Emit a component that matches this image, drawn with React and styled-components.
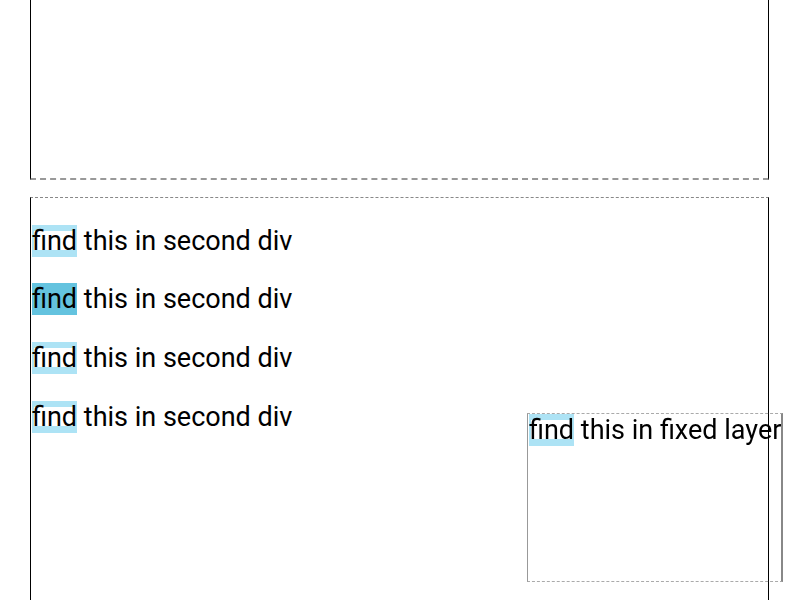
import React from "react";
import styled, { createGlobalStyle } from "styled-components";

const GlobalStyle = createGlobalStyle`
  html, body {
    margin: 0;
    padding: 0;
    background: #ffffff;
    overflow: hidden;
  }
  body {
    font-family: Roboto, "Liberation Sans", sans-serif;
    font-size: 27px;
    color: #000000;
  }
`;

const Page = styled.div`
  padding: 0 0 0 30px;
`;

const Block = styled.div`
  width: 737px;
  border-left: 1px solid #000;
  border-right: 1px solid #000;
  ${(p) => p.$top && "border-top: 1px dashed #888;"}
  ${(p) => p.$bottom && "border-bottom: 2px dashed #999;"}
  height: ${(p) => p.$height}px;
  margin-bottom: ${(p) => p.$gap || 0}px;
  overflow: hidden;
`;

const Line = styled.p`
  margin: 26.7px 0;
  white-space: nowrap;
`;

const Match = styled.span`
  background: ${(p) => (p.$active ? "#64c3df" : "#ffffff")};
  box-shadow: ${(p) =>
    p.$active
      ? "none"
      : "inset 2px 0 0 #ade3f5, inset -2px 0 0 #ade3f5, inset 0 6px 0 #ade3f5, inset 0 -7px 0 #ade3f5"};
  margin-left: 1px;
`;

const FixedLayer = styled.div`
  position: fixed;
  right: 17px;
  bottom: 18px;
  width: 253px;
  height: 167px;
  border-top: 1px dashed #aaa;
  border-bottom: 1px dashed #aaa;
  border-left: 1px solid #999;
  border-right: 2px solid #888;
  white-space: nowrap;
  overflow: visible;
`;

const lines = [false, true, false, false];

export default function App() {
  return (
    <>
      <GlobalStyle />
      <Page>
        <Block $bottom $height={178} $gap={17} />
        <Block $top $height={500}>
          {lines.map((active, i) => (
            <Line key={i}>
              <Match $active={active}>find</Match> this in second div
            </Line>
          ))}
        </Block>
      </Page>
      <FixedLayer>
        <Match>find</Match> this in fixed layer
      </FixedLayer>
    </>
  );
}
